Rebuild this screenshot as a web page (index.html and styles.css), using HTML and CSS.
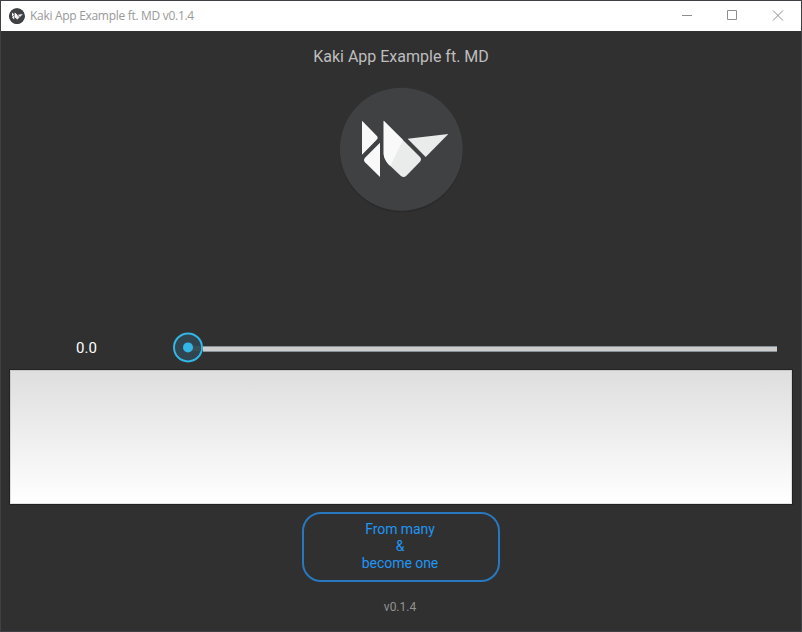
FILE: index.html
```html
<!DOCTYPE html>
<html lang="en">
<head>
<meta charset="utf-8">
<title>Kaki App Example ft. MD v0.1.4</title>
<link rel="stylesheet" href="styles.css">
</head>
<body>
<svg width="0" height="0" class="defs">
  <symbol id="kivy" viewBox="0 0 420 420">
    <circle cx="214" cy="212" r="185" fill="#2a2a2b"/>
    <circle cx="214" cy="207.500" r="184.500" fill="#404143"/>
    <path d="M96 122 140 167Q146 173 140 179L96 224Z" fill="#f9f9fa"/>
    <path d="M150 188V291L105 247Q99 240 105 233Z" fill="#f9f9fa"/>
    <path d="M161 122 270 231Q276 238 270 245L229 287Q221 295 212 287L174 251Q161 236 161 220Z" fill="#e9eceb"/>
    <path d="M161 122 219 180 181 258 174 251Q161 236 161 220Z" fill="#f9f9fa"/>
    <path d="M233 176 355 162 287 231Z" fill="#e9eceb"/>
  </symbol>
</svg>
<div class="window">
  <header class="titlebar">
    <svg class="app-icon" viewBox="25 18 380 380"><use href="#kivy" width="420" height="420"/></svg>
    <span class="caption">Kaki App Example ft. MD v0.1.4</span>
    <svg class="controls" width="102" height="30" viewBox="0 0 102 30" fill="none" stroke="#8e8e8e">
      <path d="M0 14.500H10M45.500 9.500h9v9h-9zM91 9.500l10 10M101 9.500l-10 10"/>
    </svg>
  </header>
  <main class="content">
    <h1 class="heading">Kaki App Example ft. MD</h1>
    <svg class="logo"><use href="#kivy" width="140" height="140"/></svg>
    <div class="slider-row">
      <span class="value">0.0</span>
      <div class="slider">
        <svg class="thumb" viewBox="0 0 32 32">
          <circle cx="16" cy="16.400" r="14" fill="#30454f" stroke="#33b5e5" stroke-width="2"/>
          <path d="M20 15h9v5h-9z" fill="#3b4f56"/>
          <circle cx="16" cy="16.400" r="5" fill="#33b5e5"/>
        </svg>
        <div class="track"></div>
      </div>
    </div>
    <div class="panel"></div>
    <button class="action">From many<br>&amp;<br>become one</button>
    <footer class="version">v0.1.4</footer>
  </main>
</div>
</body>
</html>
```
FILE: styles.css
```css
* { box-sizing: border-box; }

body {
  margin: 0;
  font-family: Roboto, "Liberation Sans", sans-serif;
}

.defs { display: block; }

.window {
  width: 802px;
  height: 632px;
  padding: 1px;
  background: #414145;
}

.titlebar {
  display: flex;
  align-items: center;
  height: 30px;
  padding: 0 17px 0 8px;
  background: #fff;
}

.app-icon {
  width: 16px;
  height: 16px;
  margin-bottom: 1px;
}

.caption {
  margin-left: 5px;
  font: 12px/16px "Open Sans", "Noto Sans", sans-serif;
  letter-spacing: -0.3px;
  color: #999;
  white-space: nowrap;
}

.controls { margin-left: auto; }

.content {
  display: flex;
  flex-direction: column;
  align-items: center;
  height: 600px;
  background: #303030;
}

.heading {
  margin: 16px 0 0;
  font-size: 16px;
  font-weight: 400;
  line-height: 20px;
  color: #bebebe;
}

.logo {
  width: 140px;
  height: 140px;
  margin: 13px 2px 0 0;
}

.slider-row {
  display: flex;
  align-items: center;
  width: 100%;
  height: 32px;
  margin-top: 111px;
}

.value {
  width: 171px;
  padding-top: 2px;
  font-size: 15px;
  line-height: 20px;
  text-align: center;
  color: #fff;
}

.slider {
  display: flex;
  align-items: center;
  width: 605px;
}

.thumb {
  width: 32px;
  height: 32px;
}

.track {
  flex: 1;
  height: 6px;
  margin: 3px 0 0 -1px;
  background: #ccc;
  border: solid #87919a;
  border-width: 1px 0;
}

.panel {
  width: 784px;
  height: 136px;
  margin-top: 6px;
  background: linear-gradient(#dedede, #fff);
  border: 1px solid #222;
  box-shadow: inset 0 0 0 1px rgba(140, 140, 140, 0.25);
}

.action {
  width: 198px;
  height: 70px;
  margin-top: 7px;
  padding: 0 2px 2px 0;
  font: 14px/17px Roboto, "Liberation Sans", sans-serif;
  letter-spacing: -0.05px;
  color: #2196f3;
  background: none;
  border: 2px solid #2878c0;
  border-radius: 19px;
}

.version {
  margin: 17px 2px 0 0;
  font-size: 12px;
  line-height: 16px;
  color: #929292;
}
```
